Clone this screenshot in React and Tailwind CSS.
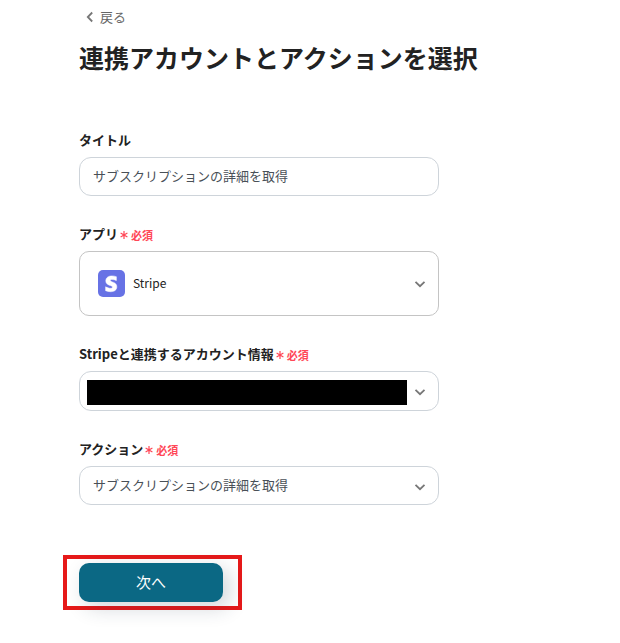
import React, { useState } from 'react'

const actions = ['サブスクリプションの詳細を取得']

function Chevron({ className }) {
  return (
    <svg className={className} width="12" height="12" viewBox="0 0 12 12" fill="none" stroke="#777" strokeWidth="1.8" aria-hidden="true">
      <path d="M1.5 3.8 L6 8.2 L10.5 3.8" />
    </svg>
  )
}

function StripeLogo({ className }) {
  return (
    <svg className={className} width="27" height="27" viewBox="0 0 27 27" aria-hidden="true">
      <rect width="27" height="27" rx="5" fill="#6772e5" />
      <path
        d="M12.3 10.5c0-.8.6-1.1 1.6-1.1 1.4 0 3.2.4 4.5 1.1V6.7c-1.5-.6-3-.8-4.5-.8-3.6 0-6.1 1.9-6.1 5 0 4.9 6.7 4.1 6.7 6.2 0 .9-.8 1.2-1.9 1.2-1.6 0-3.4-.6-5-1.5v3.9c1.7.7 3.4 1 5 1 3.8 0 6.2-1.7 6.2-4.9 0-5.2-6.5-4.4-6.5-6.3z"
        fill="#fff"
        stroke="#fff"
        strokeWidth=".5"
      />
    </svg>
  )
}

function Field({ id, label, required, children }) {
  return (
    <div>
      <label htmlFor={id} className="mb-[7px] flex items-center gap-0.5 text-[13px] leading-5 font-bold text-[#222]">
        {label}
        {required && (
          <span className="flex items-center gap-[3px] pt-0.5 text-[11px] leading-[18px] text-[#ff4757]">
            <svg width="8" height="8" viewBox="0 0 8 8" stroke="#ff4757" strokeWidth="1.2" aria-hidden="true">
              <path d="M4 0V8M.6 2L7.4 6M7.4 2L.6 6" />
            </svg>
            必須
          </span>
        )}
      </label>
      <div className="relative">{children}</div>
    </div>
  )
}

export default function App() {
  const [title, setTitle] = useState(actions[0])

  return (
    <main className="min-h-screen bg-white px-[79px] pt-[7px] pb-8 font-['Noto_Sans_CJK_JP',sans-serif] text-[13px]">
      <a href="#" className="flex w-fit items-center gap-1 pl-[5px] leading-5 text-[#666]">
        <Chevron className="rotate-90" />
        戻る
      </a>
      <h1 className="mt-2.5 text-[25px] leading-10 font-bold whitespace-nowrap text-[#222]">連携アカウントとアクションを選択</h1>

      <form className="mt-[53px] max-w-[360px]" onSubmit={e => e.preventDefault()}>
        <div className="space-y-7">
          <Field id="title" label="タイトル">
            <input id="title" type="text" value={title} onChange={e => setTitle(e.target.value)} className="block h-[39px] w-full rounded-xl border border-[#ced4da] px-[13px] pb-0.5 text-[#495057] outline-none" />
          </Field>

          <Field id="app" label="アプリ" required>
            <StripeLogo className="pointer-events-none absolute top-[19px] left-[19px]" />
            <select id="app" className="block h-[65px] w-full appearance-none rounded-[10px] border border-[#c4c4c4] pr-10 pb-0.5 pl-[53px] text-[12px] text-[#222] outline-none">
              <option>Stripe</option>
            </select>
            <Chevron className="pointer-events-none absolute top-[27px] right-[13px]" />
          </Field>

          <Field id="account" label="Stripeと連携するアカウント情報" required>
            <select id="account" className="block h-10 w-full appearance-none rounded-xl border border-[#ced4da] pr-10 pl-[13px] outline-none">
              <option></option>
            </select>
            <span className="pointer-events-none absolute top-[9px] right-8 left-2 h-[25px] bg-black" />
            <Chevron className="pointer-events-none absolute top-[15px] right-[13px]" />
          </Field>

          <Field id="action" label="アクション" required>
            <select id="action" className="block h-[39px] w-full appearance-none rounded-xl border border-[#ced4da] pr-10 pb-0.5 pl-[13px] text-[#495057] outline-none">
              {actions.map(a => (
                <option key={a}>{a}</option>
              ))}
            </select>
            <Chevron className="pointer-events-none absolute top-[15px] right-[13px]" />
          </Field>
        </div>

        <div className="mt-[50px] -ml-4 w-fit border-4 border-[#e61919] py-1 pr-[15px] pl-3">
          <button type="submit" className="block h-[39px] w-36 rounded-[10px] bg-[#0b6884] text-[15px] text-white shadow-[6px_6px_20px_rgba(30,50,70,0.2)]">
            次へ
          </button>
        </div>
      </form>
    </main>
  )
}
